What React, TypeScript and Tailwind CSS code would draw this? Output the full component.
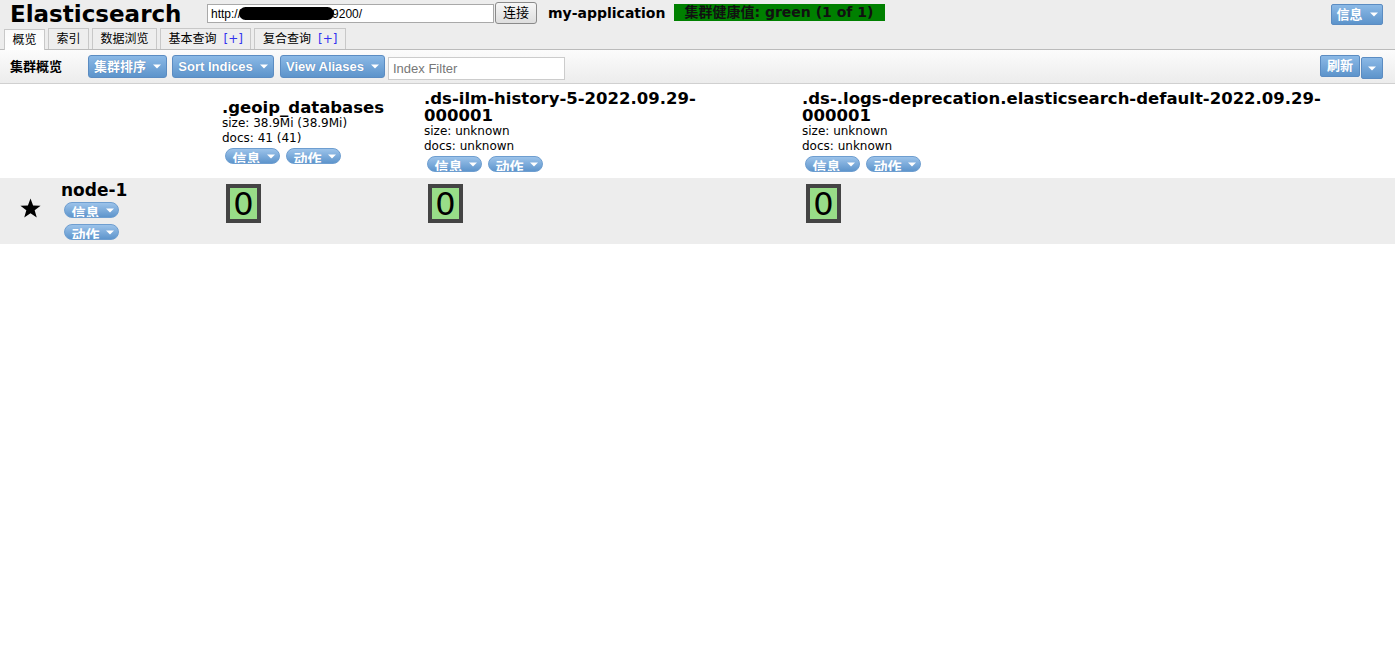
import React from "react";

const font = "font-['DejaVu_Sans','Noto_Sans_CJK_SC',sans-serif]";
const btnFont = "font-['Liberation_Sans','Noto_Sans_CJK_SC',sans-serif]";

interface IndexInfo {
  name: string[];
  size: string;
  docs: string;
}

const indices: IndexInfo[] = [
  { name: [".geoip_databases"], size: "38.9Mi (38.9Mi)", docs: "41 (41)" },
  {
    name: [".ds-ilm-history-5-2022.09.29-", "000001"],
    size: "unknown",
    docs: "unknown",
  },
  {
    name: [".ds-.logs-deprecation.elasticsearch-default-2022.09.29-", "000001"],
    size: "unknown",
    docs: "unknown",
  },
];

const colClasses = ["w-[202px]", "w-[378px]", "flex-1"];

function Caret() {
  return (
    <svg width="8" height="5" viewBox="0 0 8 5" className="shrink-0">
      <path d="M0 0.5 L8 0.5 L4 4.5 Z" fill="#fff" />
    </svg>
  );
}

function ToolButton({ label, width }: { label: string; width: string }) {
  return (
    <button
      className={`${width} ${btnFont} flex h-[23px] items-center justify-center gap-[7px] whitespace-nowrap rounded-[3px] border border-[#5b8cc2] bg-gradient-to-b from-[#8bb9e6] to-[#5d94cb] text-[13px] font-bold text-white [text-shadow:0_0_1px_rgba(40,80,140,0.6)]`}
    >
      {label}
      <Caret />
    </button>
  );
}

function Pill({ label }: { label: string }) {
  return (
    <div
      className={`${btnFont} flex h-[16px] w-[55px] items-start justify-center gap-[6px] overflow-hidden rounded-full border border-[#6e9ed0] bg-gradient-to-b from-[#9cc3ea] to-[#5e95cc] pl-[2px] pt-[3px] text-[14px] font-bold leading-[14px] text-white`}
    >
      <span>{label}</span>
      <span className="mt-[2px]">
        <Caret />
      </span>
    </div>
  );
}

function Tab({ label, plus, active }: { label: string; plus?: boolean; active?: boolean }) {
  return (
    <div
      className={`flex h-[21px] items-center border border-b-0 border-[#c8c8c8] px-[7.5px] text-[12px] ${
        active ? "relative z-10 -mb-px bg-gradient-to-b from-[#fafafa] to-white" : "bg-[#eee]"
      }`}
    >
      {label}
      {plus && <span className="ml-[7px] text-[#3333ee]">[+]</span>}
    </div>
  );
}

function Shard() {
  return (
    <div className="ml-[4px] flex h-[39px] w-[35px] items-center justify-center border-[4px] border-[#444] bg-[#98dd88] text-[32px] leading-none text-black">
      0
    </div>
  );
}

export default function App() {
  return (
    <div className={`min-h-screen bg-white text-black ${font}`}>
      <header className="bg-[#ededed]">
        <div className="flex h-[29px] items-start">
          <h1 className="ml-[10px] w-[197px] text-[23px] font-bold leading-[28px]">Elasticsearch</h1>
          <div className="mt-[4px] flex h-[19px] w-[287px] items-center border border-[#a9a9a9] bg-white pl-[3px] font-['Liberation_Sans',sans-serif] text-[12px]">
            <span>http://</span>
            <span className="mx-[-2px] inline-block h-[13px] w-[95px] rounded-[7px] bg-black" />
            <span>9200/</span>
          </div>
          <button className="ml-[1px] mt-[2px] h-[22px] w-[42px] rounded-[3px] border border-[#8a8a8a] bg-gradient-to-b from-[#f6f6f6] to-[#dedede] text-[13px]">
            连接
          </button>
          <span className="ml-[11px] mt-[4px] text-[14px] font-bold leading-[18px]">my-application</span>
          <div className="ml-[9px] mt-[4px] flex h-[17px] w-[211px] items-center bg-[#008000] pl-[10px] text-[14px] font-bold text-[#111]">
            集群健康值: green (1 of 1)
          </div>
          <div className="ml-auto mr-[12px] mt-[4px]">
            <button
              className={`${btnFont} flex h-[21px] w-[52px] items-center justify-center gap-[7px] rounded-[2px] border border-[#5b8cc2] bg-gradient-to-b from-[#8bb9e6] to-[#5d94cb] text-[13px] font-bold text-white`}
            >
              信息
              <Caret />
            </button>
          </div>
        </div>
        <div className="flex h-[20px] items-end gap-[3px] pl-[4px]">
          <Tab label="概览" active />
          <Tab label="索引" />
          <Tab label="数据浏览" />
          <Tab label="基本查询" plus />
          <Tab label="复合查询" plus />
        </div>
      </header>

      <div className="flex h-[35px] items-start border-y border-t-[#bbb] border-b-[#d0d0d0] bg-gradient-to-b from-[#fcfcfc] to-[#ececec]">
        <span className="ml-[10px] mt-[9px] w-[78px] text-[13px] font-bold leading-[16px]">集群概览</span>
        <div className="mt-[5px] flex">
          <ToolButton label="集群排序" width="w-[79px]" />
          <div className="ml-[5px]">
            <ToolButton label="Sort Indices" width="w-[102px]" />
          </div>
          <div className="ml-[6px]">
            <ToolButton label="View Aliases" width="w-[105px]" />
          </div>
        </div>
        <input
          placeholder="Index Filter"
          className="ml-[3px] mt-[7px] h-[23px] w-[177px] border border-[#ccc] bg-white px-[4px] font-['Liberation_Sans',sans-serif] text-[13px] placeholder:text-[#777] focus:outline-none"
        />
        <div className="ml-auto mr-[12px] mt-[5px] flex items-start gap-[1px]">
          <button
            className={`${btnFont} h-[22px] w-[40px] rounded-[2px] border border-[#5b8cc2] bg-gradient-to-b from-[#8bb9e6] to-[#5d94cb] text-[13px] font-bold text-white`}
          >
            刷新
          </button>
          <button className="mt-[2px] flex h-[22px] w-[22px] items-center justify-center rounded-[2px] border border-[#5b8cc2] bg-gradient-to-b from-[#8bb9e6] to-[#5d94cb]">
            <Caret />
          </button>
        </div>
      </div>

      <main>
        <div className="flex h-[94px] items-center">
          <div className="w-[222px]" />
          {indices.map((idx, i) => (
            <div key={i} className={`${colClasses[i]} flex flex-col`}>
              <div className="text-[16.5px] font-bold leading-[17px]">
                {idx.name.map((line) => (
                  <div key={line}>{line}</div>
                ))}
              </div>
              <div className="text-[12px] leading-[15px]">size: {idx.size}</div>
              <div className="text-[12px] leading-[15px]">docs: {idx.docs}</div>
              <div className="ml-[3px] mt-[2px] flex gap-[6px]">
                <Pill label="信息" />
                <Pill label="动作" />
              </div>
            </div>
          ))}
        </div>

        <div className="flex h-[66px] bg-[#ededed]">
          <div className="flex w-[222px]">
            <div className="flex w-[61px] items-center justify-center pb-[6px]">
              <svg width="21" height="20" viewBox="0 0 24 23">
                <path d="M12 0.5 L15 8.6 L23.6 8.9 L16.8 14.2 L19.2 22.5 L12 17.6 L4.8 22.5 L7.2 14.2 L0.4 8.9 L9 8.6 Z" fill="#000" />
              </svg>
            </div>
            <div className="flex flex-col pt-[2px]">
              <div className="text-[17px] font-bold leading-[20px]">node-1</div>
              <div className="ml-[3px] mt-[2px] flex flex-col gap-[6px]">
                <Pill label="信息" />
                <Pill label="动作" />
              </div>
            </div>
          </div>
          {indices.map((_, i) => (
            <div key={i} className={`${colClasses[i]} pt-[6px]`}>
              <Shard />
            </div>
          ))}
        </div>
      </main>
    </div>
  );
}
